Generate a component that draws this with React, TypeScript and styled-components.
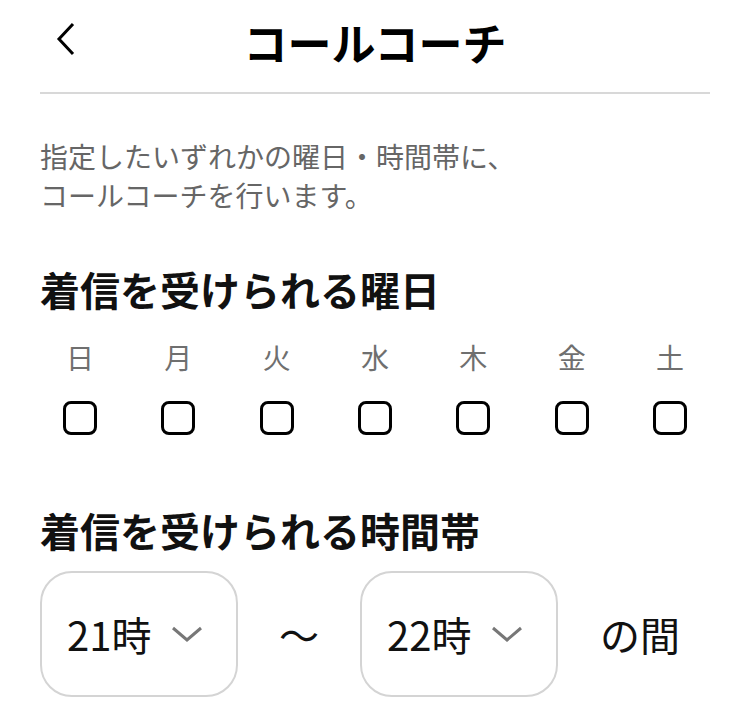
import React from "react";
import styled, {createGlobalStyle} from "styled-components";

const GlobalStyle = createGlobalStyle`
    html, body {
        margin: 0;
        padding: 0;
        background: #ffffff;
    }
    body {
        font-family: "Noto Sans CJK JP", "Noto Sans", sans-serif;
        color: #111111;
    }
`;

const Page = styled.div`
    width: 750px;
    box-sizing: border-box;
    padding: 0 40px;
`;

const Header = styled.header`
    position: relative;
    height: 94px;
    display: flex;
    justify-content: center;
    padding-top: 12px;
    box-sizing: border-box;
    border-bottom: 2px solid #d8d8d8;
`;

const BackButton = styled.button`
    position: absolute;
    left: 12px;
    top: 20px;
    width: 28px;
    height: 38px;
    padding: 0;
    border: none;
    background: none;
    display: flex;
    align-items: center;
    justify-content: center;
`;

const Title = styled.h1`
    margin: 0;
    font-size: 44px;
    font-weight: 700;
    line-height: 60px;
    color: #000000;
`;

const Description = styled.p`
    margin: 43px 0 0;
    font-size: 28px;
    line-height: 39px;
    color: #666666;
`;

const SectionTitle = styled.h2<{$gap: number}>`
    margin: ${(p) => p.$gap}px 0 0;
    font-size: 40px;
    font-weight: 700;
    line-height: 48px;
    color: #111111;
`;

const DayRow = styled.div`
    margin-top: 27px;
    display: flex;
    justify-content: space-between;
`;

const DayItem = styled.label`
    width: 80px;
    display: flex;
    flex-direction: column;
    align-items: center;
    gap: 27px;
`;

const DayName = styled.span`
    font-size: 28px;
    line-height: 34px;
    color: #6f6f6f;
`;

const CheckBox = styled.span`
    width: 34px;
    height: 34px;
    box-sizing: border-box;
    border: 3.5px solid #000000;
    border-radius: 8px;
`;

const TimeRow = styled.div`
    margin-top: 17px;
    display: flex;
    align-items: center;
`;

const Select = styled.div`
    width: 198px;
    height: 126px;
    box-sizing: border-box;
    border: 2px solid #d4d4d4;
    border-radius: 32px;
    padding-left: 25px;
    display: flex;
    align-items: center;
    gap: 20px;
`;

const SelectValue = styled.span`
    font-size: 40px;
    line-height: 48px;
    color: #111111;
`;

const Tilde = styled.span`
    width: 122px;
    text-align: center;
    font-size: 40px;
    color: #111111;
`;

const Suffix = styled.span`
    margin-left: 42px;
    font-size: 40px;
    color: #111111;
`;

const days = ["日", "月", "火", "水", "木", "金", "土"];

const ChevronDown = () => (
    <svg width="32" height="16" viewBox="0 0 32 16">
        <polyline points="2,2 16,14 30,2" fill="none" stroke="#777777" strokeWidth="3" />
    </svg>
);

const TimeSelect = ({value}: {value: string}) => (
    <Select>
        <SelectValue>{value}</SelectValue>
        <ChevronDown />
    </Select>
);

export default function App() {
    return (
        <Page>
            <GlobalStyle />
            <Header>
                <BackButton aria-label="戻る">
                    <svg width="20" height="34" viewBox="0 0 20 34">
                        <polyline points="17,2 3,17 17,32" fill="none" stroke="#000000" strokeWidth="3" />
                    </svg>
                </BackButton>
                <Title>コールコーチ</Title>
            </Header>
            <Description>
                指定したいずれかの曜日・時間帯に、
                <br />
                コールコーチを行います。
            </Description>
            <SectionTitle $gap={50}>着信を受けられる曜日</SectionTitle>
            <DayRow>
                {days.map((d) => (
                    <DayItem key={d}>
                        <DayName>{d}</DayName>
                        <CheckBox />
                    </DayItem>
                ))}
            </DayRow>
            <SectionTitle $gap={71}>着信を受けられる時間帯</SectionTitle>
            <TimeRow>
                <TimeSelect value="21時" />
                <Tilde>〜</Tilde>
                <TimeSelect value="22時" />
                <Suffix>の間</Suffix>
            </TimeRow>
        </Page>
    );
}
